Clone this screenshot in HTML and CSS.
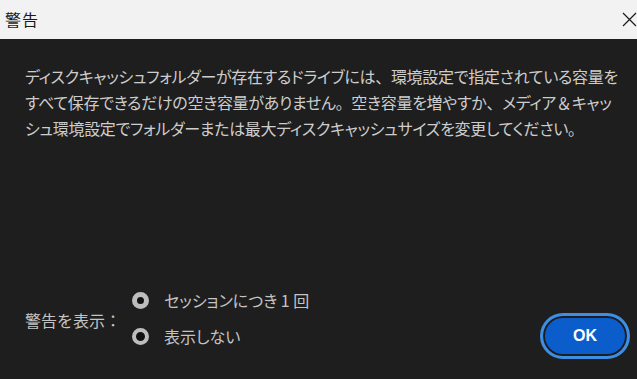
FILE: index.html
```html
<!DOCTYPE html>
<html lang="ja">
<head>
    <meta charset="UTF-8">
    <title>警告</title>
    <link rel="stylesheet" href="styles.css">
</head>
<body>
    <div class="dialog">
        <div class="titlebar">
            <span class="title">警告</span>
            <svg class="close" width="15" height="15" viewBox="0 0 15 15">
                <path d="M1 1 L14 14 M14 1 L1 14" stroke="#1a1a1a" stroke-width="1.2" fill="none"/>
            </svg>
        </div>
        <div class="content">
            <p class="message">ディスクキャッシュフォルダーが存在するドライブには<span class="punct">、</span>環境設定で指定されている容量を<br>すべて保存できるだけの空き容量がありません<span class="punct">。</span>空き容量を増やすか<span class="punct">、</span>メディア<span class="punct">＆</span>キャッ<br>シュ環境設定でフォルダーまたは最大ディスクキャッシュサイズを変更してください<span class="punct">。</span></p>
            <div class="footer">
                <div class="options">
                    <span class="options-label">警告を表示：</span>
                    <div class="radios">
                        <label class="radio checked"><span class="dot"></span>セッションにつき 1 回</label>
                        <label class="radio"><span class="dot"></span>表示しない</label>
                    </div>
                </div>
                <button class="ok">OK</button>
            </div>
        </div>
    </div>
</body>
</html>
```

FILE: styles.css
```css
* {
    box-sizing: border-box;
}

body {
    margin: 0;
    padding: 0;
    background: #1e1e1e;
    font-family: "Noto Sans CJK JP", "Noto Sans", sans-serif;
}

.dialog {
    width: 637px;
    height: 379px;
    display: flex;
    flex-direction: column;
}

.titlebar {
    height: 39px;
    background: #f2f2f2;
    display: flex;
    align-items: center;
    justify-content: space-between;
    padding: 0 0 2px 5px;
}

.title {
    font-size: 16px;
    color: #1a1a1a;
    letter-spacing: 1px;
}

.close {
    margin-top: 1px;
}

.content {
    flex: 1;
    display: flex;
    flex-direction: column;
    justify-content: space-between;
    padding: 24px 7px 20px 25px;
}

.message {
    margin: 0;
    font-size: 16px;
    line-height: 26px;
    color: #cdcdcd;
    font-feature-settings: "palt";
    letter-spacing: -0.3px;
    white-space: nowrap;
}

.punct {
    font-feature-settings: normal;
}

.footer {
    display: flex;
    align-items: flex-end;
    justify-content: space-between;
}

.options {
    display: flex;
    align-items: center;
    gap: 11px;
    margin-bottom: 12px;
}

.options-label {
    font-size: 16px;
    color: #c4c4c4;
    padding-top: 4px;
}

.radios {
    display: flex;
    flex-direction: column;
    gap: 14px;
}

.radio {
    display: flex;
    align-items: center;
    gap: 15px;
    font-size: 16px;
    color: #c4c4c4;
    font-feature-settings: "palt";
    line-height: 22px;
}

.dot {
    width: 17px;
    height: 17px;
    border-radius: 50%;
    background: #111;
    border: 4px solid #bdbdbd;
}

.radio.checked .dot {
    border-width: 5.5px;
}

.ok {
    width: 90px;
    height: 46px;
    border-radius: 23px;
    border: 3px solid #3e8ee3;
    background: #0b5dcc;
    box-shadow: inset 0 0 0 2px #1e1e1e;
    color: #fff;
    font-family: "Liberation Sans", sans-serif;
    font-weight: bold;
    font-size: 16px;
    padding: 0;
}
```
